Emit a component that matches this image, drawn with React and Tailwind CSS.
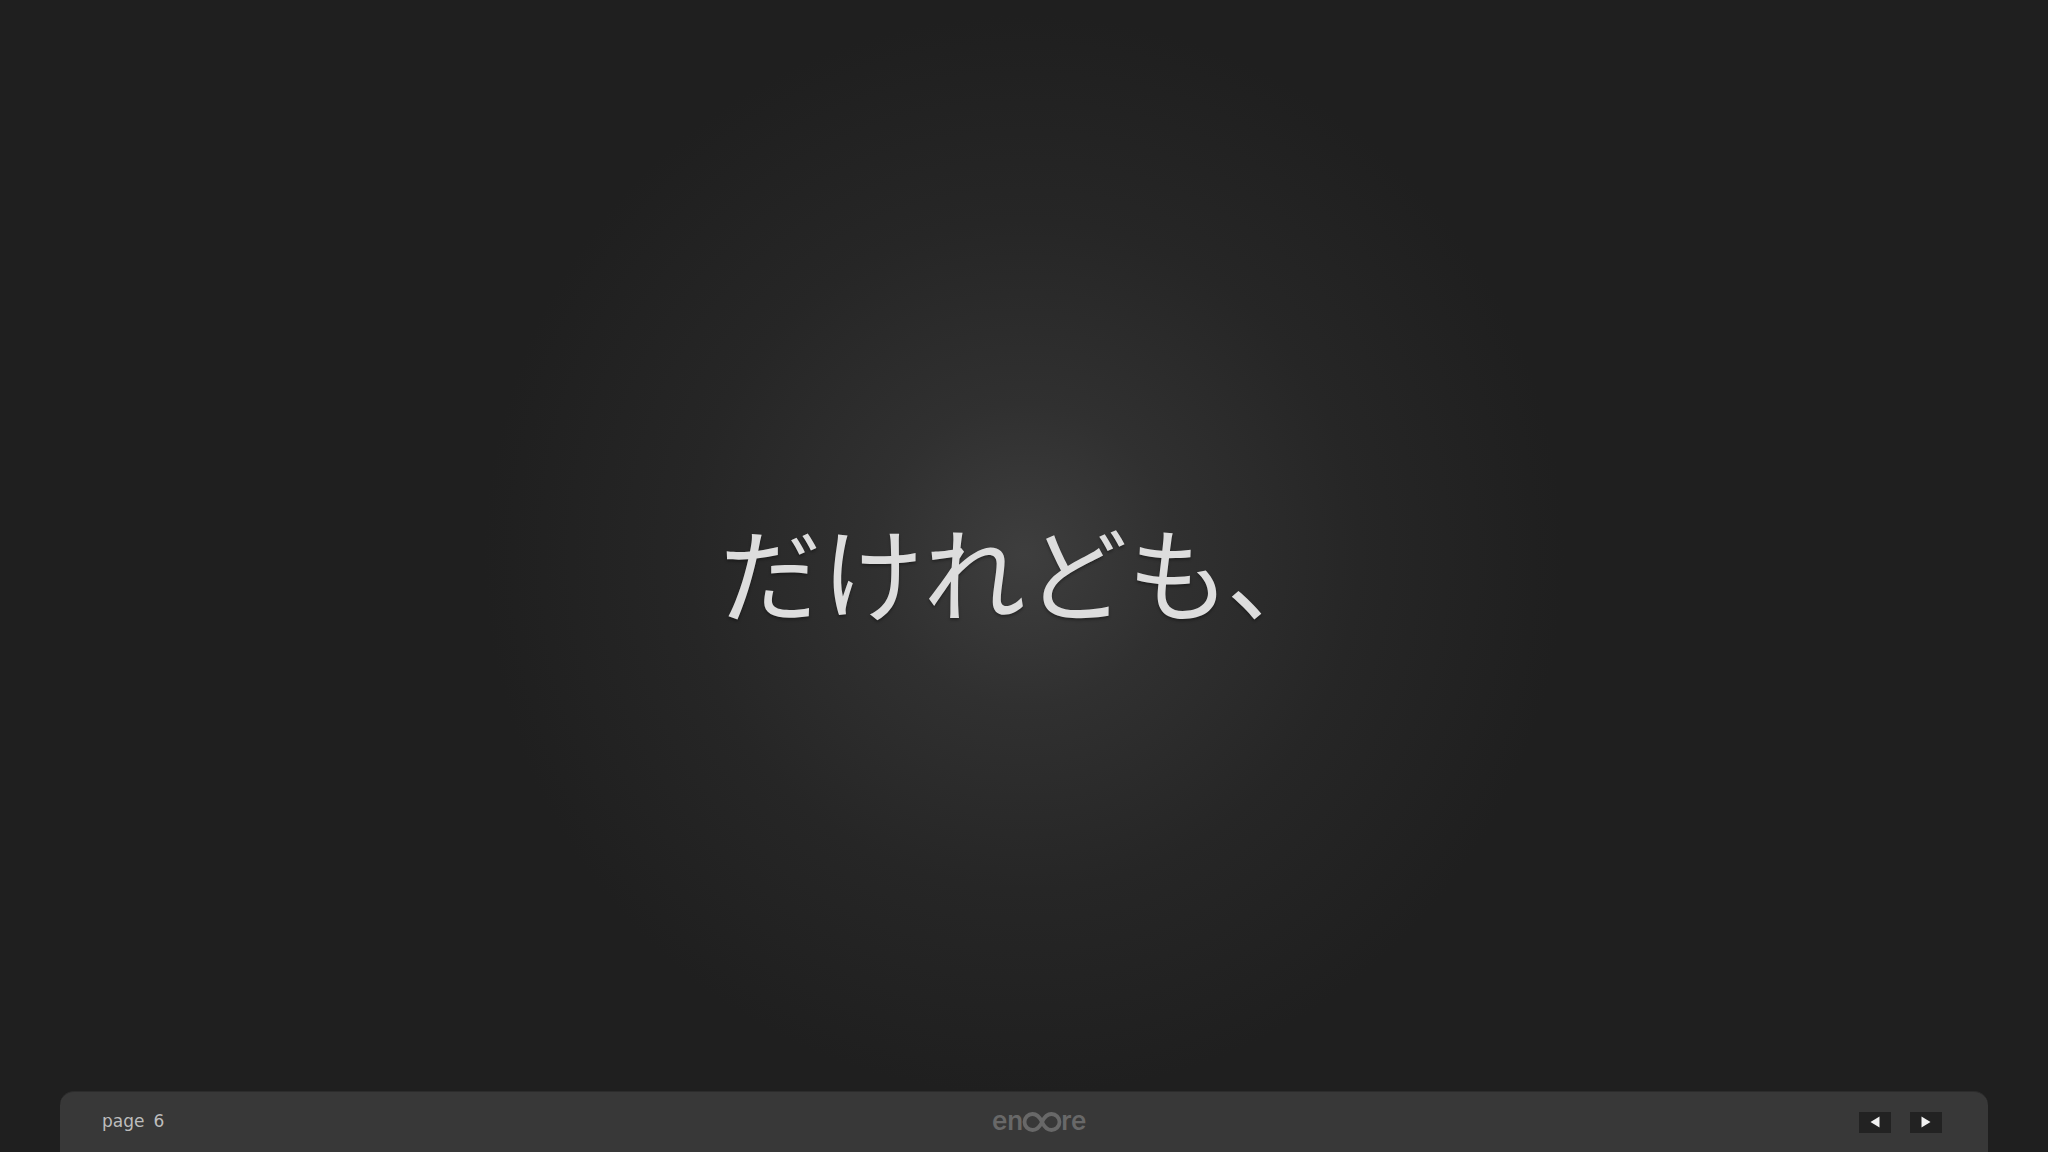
import React from 'react';

const Arrow = ({ direction }) => (
  <button className="w-[32px] h-[21px] bg-[#222222] flex items-center justify-center">
    <svg width="10" height="12" viewBox="0 0 10 12">
      {direction === 'left'
        ? <path d="M9.5 0.5v11L0.5 6z" fill="#f2f2f2" />
        : <path d="M0.5 0.5v11L9.5 6z" fill="#f2f2f2" />}
    </svg>
  </button>
);

const Logo = () => (
  <div className="flex items-center text-[#686868] font-['Inter',sans-serif] font-semibold text-[26px] leading-none">
    <span>en</span>
    <svg width="40" height="20" viewBox="0 0 40 20" fill="none" className="mt-[2px] -mx-[1px]">
      <path
        d="M20 10C17.500 4.500 15 2 10.500 2a8 8 0 0 0 0 16c4.500 0 7-2.500 9.500-8s5-8 9.500-8a8 8 0 0 1 0 16c-4.500 0-7-2.500-9.500-8z"
        stroke="#686868"
        strokeWidth="3.8"
      />
    </svg>
    <span>re</span>
  </div>
);

export default function App() {
  return (
    <div className="w-full h-screen flex flex-col overflow-hidden bg-[#1f1f1f] bg-[radial-gradient(circle_540px_at_1024px_555px,#3e3e3e_0%,#303030_28%,#262626_62%,#1f1f1f_100%)]">
      {/* Slide */}
      <main className="flex-1 flex items-center justify-center pt-[48px]">
        <h1 className="font-['Noto_Sans_CJK_JP','Noto_Sans_CJK_SC',sans-serif] font-normal text-[102px] leading-none text-[#dddddd] [text-shadow:0_2px_3px_rgba(0,0,0,0.35)]">
          だけれども、
        </h1>
      </main>

      {/* Bottom bar */}
      <footer className="relative mx-[60px] h-[61px] shrink-0 rounded-t-[14px] bg-[#383838] border-t border-[#2c2c2c] pl-[42px] pr-[46px] flex items-center justify-between">
        <div className="flex gap-[9px] text-[17px] text-[#bdbdbd] font-['DejaVu_Sans',sans-serif] -mt-[1px]">
          <span>page</span>
          <span>6</span>
        </div>
        <div className="absolute left-[932px] top-[16px]">
          <Logo />
        </div>
        <div className="flex gap-[19px]">
          <Arrow direction="left" />
          <Arrow direction="right" />
        </div>
      </footer>
    </div>
  );
}
